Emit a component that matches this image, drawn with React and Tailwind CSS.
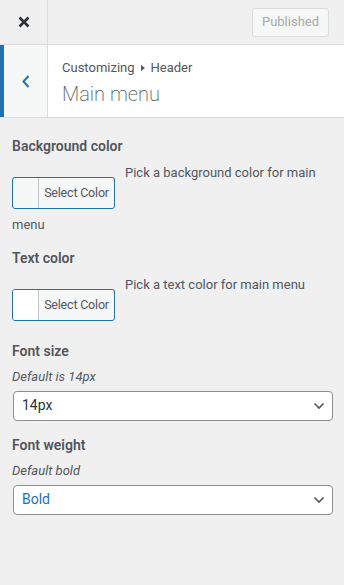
const FONT = "font-['Roboto','Liberation_Sans',sans-serif]";

function ColorControl({ title, description, rest, swatch }) {
  return (
    <div className="mb-3 text-[13px] leading-[19.5px] text-[#50575e]">
      <div className="text-[14px] font-semibold leading-[24.5px] mb-1">{title}</div>
      <div className="flex items-start">
        <button
          type="button"
          className="flex shrink-0 mt-[14px] mb-[6px] mr-[10px] h-8 w-[103px] border border-[#2271b1] rounded-[3px] overflow-hidden bg-[#f6f7f7]"
        >
          <span className={`w-[25px] h-full ${swatch}`} />
          <span className="flex-1 h-full border-l border-[#c3c4c7] flex items-center justify-center whitespace-nowrap text-[12.5px] tracking-[-0.2px] text-[#50575e]">
            Select Color
          </span>
        </button>
        <span>{description}</span>
      </div>
      {rest && <div>{rest}</div>}
    </div>
  );
}

function SelectControl({ title, description, value, valueClass }) {
  return (
    <div className="mb-3">
      <div className="text-[14px] font-semibold leading-[24.5px] text-[#50575e] mb-1">{title}</div>
      <div className="text-[13px] leading-[19.5px] italic text-[#50575e] mb-1">{description}</div>
      <div className="ml-px w-[320px] h-[30px] flex items-center justify-between bg-white border border-[#8c8f94] rounded-[4px] pl-2 pr-[7px]">
        <span className={`text-[14px] ${valueClass}`}>{value}</span>
        <svg width="12" height="8" viewBox="0 0 12 8" fill="none">
          <path d="M1.5 1.5 L6 6 L10.5 1.5" stroke="#50575e" strokeWidth="1.6" />
        </svg>
      </div>
    </div>
  );
}

export default function App() {
  return (
    <div className={`${FONT} w-full h-[585px] bg-[#f0f0f0]`}>
      <div className="h-[45px] flex items-stretch justify-between border-b border-[#dcdcde]">
        <button type="button" className="w-12 flex items-center justify-center border-r border-[#dcdcde]">
          <svg width="12" height="12" viewBox="0 0 12 12">
            <path d="M1.5 1.5 L10.5 10.5 M10.5 1.5 L1.5 10.5" stroke="#2c3338" strokeWidth="2.6" />
          </svg>
        </button>
        <div className="flex items-center pr-[15px]">
          <div className="h-[29px] w-[77px] flex items-center justify-center border border-[#dcdcde] bg-[#f6f7f7] rounded-[3px] text-[13px] text-[#a7aaad]">
            Published
          </div>
        </div>
      </div>

      <div className="h-[73px] flex bg-white border-b border-[#dcdcde]">
        <button type="button" className="w-12 flex items-center justify-center bg-[#f6f7f7] border-l-4 border-l-[#2271b1] border-r border-r-[#dcdcde]">
          <svg width="8" height="13" viewBox="0 0 8 13" fill="none">
            <path d="M6.5 1 L1.5 6.5 L6.5 12" stroke="#2271b1" strokeWidth="2" />
          </svg>
        </button>
        <div className="pl-[14px] pt-[13px]">
          <div className="flex items-center text-[13px] leading-5 text-[#50575e]">
            Customizing
            <svg className="mx-[6px]" width="4" height="6" viewBox="0 0 4 6">
              <path d="M0 0 L4 3 L0 6 Z" fill="#50575e" />
            </svg>
            Header
          </div>
          <div className="mt-[3px] text-[20px] leading-[26px] font-extralight text-[#50575e]">Main menu</div>
        </div>
      </div>

      <div className="px-3 pt-4">
        <ColorControl
          title="Background color"
          description="Pick a background color for main"
          rest="menu"
          swatch="bg-transparent"
        />
        <ColorControl
          title="Text color"
          description="Pick a text color for main menu"
          swatch="bg-white"
        />
        <SelectControl
          title="Font size"
          description="Default is 14px"
          value="14px"
          valueClass="text-[#2c3338]"
        />
        <SelectControl
          title="Font weight"
          description="Default bold"
          value="Bold"
          valueClass="text-[#2271b1]"
        />
      </div>
    </div>
  );
}
